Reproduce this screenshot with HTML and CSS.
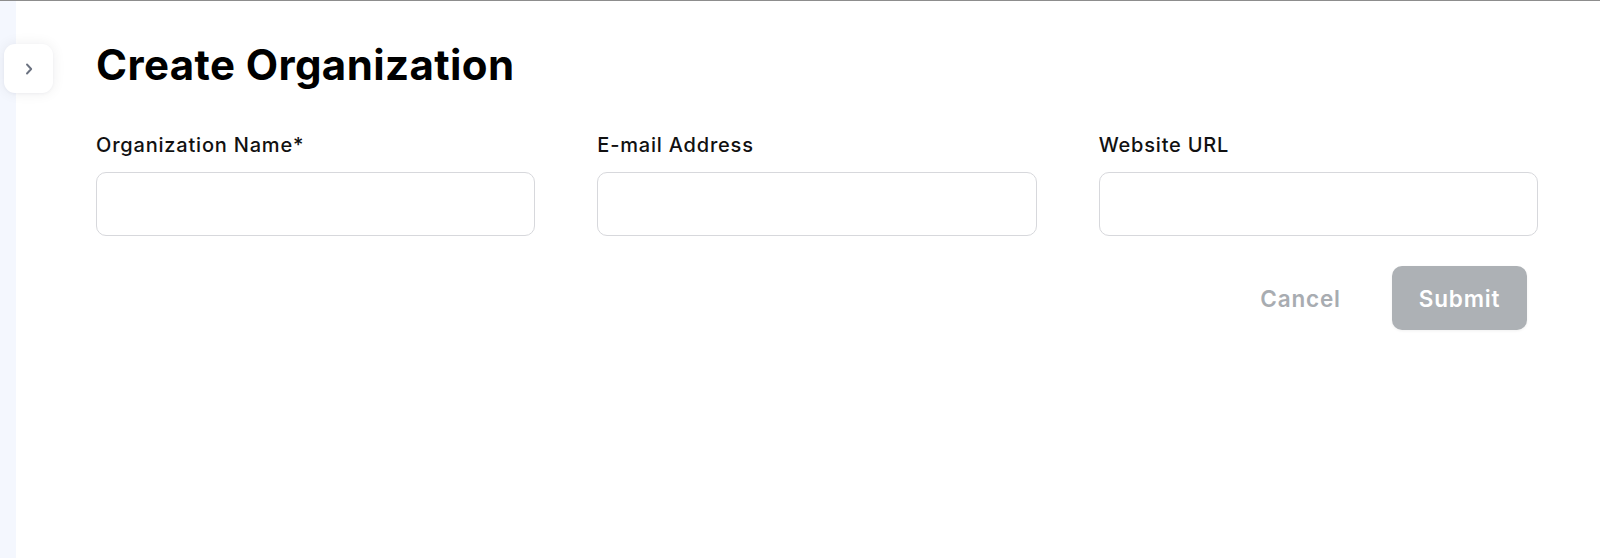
FILE: index.html
```html
<!DOCTYPE html>
<html lang="en">
<head>
<meta charset="utf-8">
<title>Create Organization</title>
<link rel="stylesheet" href="styles.css">
</head>
<body>
<div class="app">
  <aside class="sidebar">
    <button class="toggle" type="button" aria-label="Expand sidebar">
      <svg width="10" height="14" viewBox="0 0 10 14" fill="none"><path d="M3 2.5 L7.2 7 L3 11.5" stroke="#6b7280" stroke-width="1.9" stroke-linecap="round" stroke-linejoin="round"/></svg>
    </button>
  </aside>
  <main class="main">
    <h1 class="title">Create Organization</h1>
    <form class="form">
      <div class="fields">
        <div class="field">
          <label class="label" for="org">Organization Name*</label>
          <input class="input" id="org" type="text">
        </div>
        <div class="field">
          <label class="label" for="email">E-mail Address</label>
          <input class="input" id="email" type="email">
        </div>
        <div class="field">
          <label class="label" for="url">Website URL</label>
          <input class="input" id="url" type="text">
        </div>
      </div>
      <div class="actions">
        <button class="btn btn-cancel" type="button">Cancel</button>
        <button class="btn btn-submit" type="submit" disabled>Submit</button>
      </div>
    </form>
  </main>
</div>
</body>
</html>
```
FILE: styles.css
```css
html, body {
  margin: 0;
  padding: 0;
  height: 100%;
}
body {
  font-family: Inter, "Noto Sans", "Liberation Sans", sans-serif;
  background: #ffffff;
  color: #0a0a0a;
  border-top: 1px solid #8d8d8d;
  box-sizing: border-box;
}
.app {
  display: flex;
  height: 100%;
}
.sidebar {
  width: 16px;
  flex: none;
  background: #f4f7fe;
  position: relative;
}
.toggle {
  position: absolute;
  left: 4px;
  top: 43px;
  width: 49px;
  height: 49px;
  border: none;
  border-radius: 11px;
  background: #ffffff;
  box-shadow: 0 0 14px rgba(15, 23, 42, 0.07), 0 1px 3px rgba(15, 23, 42, 0.04);
  display: flex;
  align-items: center;
  justify-content: center;
  padding: 0;
  z-index: 2;
}
.main {
  flex: 1;
  padding: 40px 62px 0 80px;
}
.title {
  margin: 0;
  font-size: 42px;
  line-height: 48px;
  font-weight: 700;
  color: #000;
  letter-spacing: 0.4px;
}
.fields {
  display: grid;
  grid-template-columns: repeat(3, 1fr);
  column-gap: 62px;
  margin-top: 44px;
}
.field {
  display: flex;
  flex-direction: column;
}
.label {
  font-size: 20px;
  line-height: 24px;
  font-weight: 500;
  color: #111111;
  letter-spacing: 0.8px;
  margin-bottom: 15px;
}
.input {
  height: 64px;
  box-sizing: border-box;
  border: 1.5px solid #d7d8dc;
  border-radius: 10px;
  background: #fff;
  font: inherit;
  font-size: 20px;
  padding: 0 16px;
  outline: none;
}
.actions {
  display: flex;
  justify-content: flex-end;
  gap: 24px;
  margin-top: 30px;
  padding-right: 11px;
}
.btn {
  width: 135px;
  height: 64px;
  border: none;
  border-radius: 10px;
  font-family: inherit;
  font-size: 22.5px;
  font-weight: 600;
  letter-spacing: 0.8px;
  padding: 0;
}
.btn-cancel {
  background: transparent;
  color: #a8acb1;
}
.btn-submit {
  background: #adb1b5;
  color: #ffffff;
  box-shadow: 0 1px 3px rgba(0, 0, 0, 0.06);
}
```
